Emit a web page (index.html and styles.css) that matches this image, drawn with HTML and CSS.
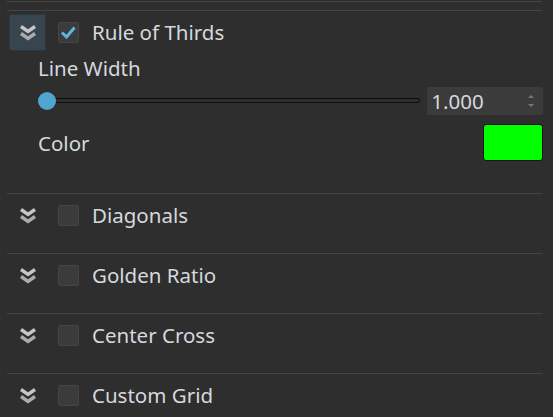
FILE: index.html
```html
<!DOCTYPE html>
<html>
<head>
<meta charset="utf-8">
<link rel="stylesheet" href="styles.css">
</head>
<body>
<div class="panel">
  <div class="topline"></div>

  <section class="group">
    <div class="head">
      <button class="expand active" aria-label="collapse">
        <svg width="18" height="16" viewBox="0 0 18 16"><path d="M2 1.5 L9 6.5 L16 1.5" /><path d="M2 8.5 L9 13.5 L16 8.5" class="lo"/></svg>
      </button>
      <span class="check on">
        <svg width="21" height="21" viewBox="0 0 21 21"><path d="M4 10.5 L8.5 15 L16.5 5.5"/></svg>
      </span>
      <span class="title">Rule of Thirds</span>
    </div>
    <div class="body">
      <div class="label">Line Width</div>
      <div class="slider-row">
        <div class="slider">
          <span class="track"></span>
          <span class="knob"></span>
        </div>
        <div class="spin">
          <span class="val">1.000</span>
          <span class="arrows">
            <svg width="8" height="16" viewBox="0 0 8 16"><path d="M1 5 L4 2 L7 5 Z"/><path d="M1 11 L4 14 L7 11 Z"/></svg>
          </span>
        </div>
      </div>
      <div class="color-row">
        <span class="label">Color</span>
        <span class="swatch"></span>
      </div>
    </div>
  </section>

  <section class="group">
    <div class="head">
      <button class="expand" aria-label="expand">
        <svg width="18" height="16" viewBox="0 0 18 16"><path d="M2 1.5 L9 6.5 L16 1.5" /><path d="M2 8.5 L9 13.5 L16 8.5" class="lo"/></svg>
      </button>
      <span class="check"></span>
      <span class="title">Diagonals</span>
    </div>
  </section>

  <section class="group">
    <div class="head">
      <button class="expand" aria-label="expand">
        <svg width="18" height="16" viewBox="0 0 18 16"><path d="M2 1.5 L9 6.5 L16 1.5" /><path d="M2 8.5 L9 13.5 L16 8.5" class="lo"/></svg>
      </button>
      <span class="check"></span>
      <span class="title">Golden Ratio</span>
    </div>
  </section>

  <section class="group">
    <div class="head">
      <button class="expand" aria-label="expand">
        <svg width="18" height="16" viewBox="0 0 18 16"><path d="M2 1.5 L9 6.5 L16 1.5" /><path d="M2 8.5 L9 13.5 L16 8.5" class="lo"/></svg>
      </button>
      <span class="check"></span>
      <span class="title">Center Cross</span>
    </div>
  </section>

  <section class="group">
    <div class="head">
      <button class="expand" aria-label="expand">
        <svg width="18" height="16" viewBox="0 0 18 16"><path d="M2 1.5 L9 6.5 L16 1.5" /><path d="M2 8.5 L9 13.5 L16 8.5" class="lo"/></svg>
      </button>
      <span class="check"></span>
      <span class="title">Custom Grid</span>
    </div>
  </section>
</div>
</body>
</html>
```

FILE: styles.css
```css
html, body {
  margin: 0;
  padding: 0;
  background: #2e2e2e;
  height: 100%;
  overflow: hidden;
}
body {
  font-family: "Noto Sans", "Open Sans", sans-serif;
  color: #d5d9de;
  font-size: 20.5px;
}
.panel {
  display: flex;
  flex-direction: column;
}
.topline {
  margin: 1px 0 0 7px;
  width: 535px;
  height: 1px;
  background: #474747;
  border-radius: 0 1px 1px 0;
}
.group {
  margin-left: 7px;
  width: 536px;
  border-top: 1px solid #444444;
  border-top-right-radius: 2px;
  padding: 3px 0 19px 2px;
  box-sizing: border-box;
}
.group:first-of-type {
  margin-top: 8px;
  padding-bottom: 32px;
}
.head {
  display: flex;
  align-items: center;
  height: 37px;
}
.expand {
  width: 37px;
  height: 37px;
  margin: 0;
  padding: 0;
  border: 1px solid transparent;
  border-radius: 2px;
  background: transparent;
  display: flex;
  align-items: center;
  justify-content: center;
  box-sizing: border-box;
}
.expand.active {
  background: #37464e;
  border-color: #2c383e;
}
.expand svg {
  display: block;
}
.expand svg path {
  fill: none;
  stroke: #c6c6c6;
  stroke-width: 3.4;
  stroke-linejoin: miter;
}
.expand svg path.lo {
  stroke: #acacac;
}
.check {
  width: 21px;
  height: 21px;
  margin-left: 12px;
  box-sizing: border-box;
  background: #3b3b3b;
  border: 1px solid #454545;
  border-radius: 2px;
  display: flex;
  align-items: center;
  justify-content: center;
}
.check svg {
  display: block;
  margin: -1px;
}
.check svg path {
  fill: none;
  stroke: #5cb5de;
  stroke-width: 3;
}
.title {
  margin-left: 13px;
  line-height: 1;
}
.body {
  padding-left: 29px;
  display: flex;
  flex-direction: column;
}
.label {
  line-height: 26px;
}
.body > .label {
  margin-top: 4px;
}
.slider-row {
  display: flex;
  align-items: center;
  height: 28px;
  margin-top: 6px;
}
.slider {
  position: relative;
  width: 383px;
  height: 28px;
}
.track {
  position: absolute;
  left: 9px;
  right: 0;
  top: 11px;
  height: 5px;
  box-sizing: border-box;
  border: 1px solid #0c0c0c;
  border-left: none;
  border-radius: 0 3px 3px 0;
}
.knob {
  position: absolute;
  left: 0;
  top: 5px;
  width: 18px;
  height: 18px;
  border-radius: 50%;
  background: #4fa5cf;
}
.spin {
  margin-left: 7px;
  width: 116px;
  height: 28px;
  box-sizing: border-box;
  background: #3b3b3b;
  border-radius: 2px;
  display: flex;
  align-items: center;
  justify-content: space-between;
  padding: 0 8px 0 4px;
}
.val {
  line-height: 1;
}
.arrows svg {
  display: block;
}
.arrows svg path {
  fill: #767676;
}
.color-row {
  display: flex;
  align-items: center;
  justify-content: space-between;
  height: 37px;
  margin-top: 9px;
}
.swatch {
  width: 60px;
  height: 37px;
  box-sizing: border-box;
  background: #00ff00;
  border: 1px solid #111111;
  border-radius: 3px;
}
```
